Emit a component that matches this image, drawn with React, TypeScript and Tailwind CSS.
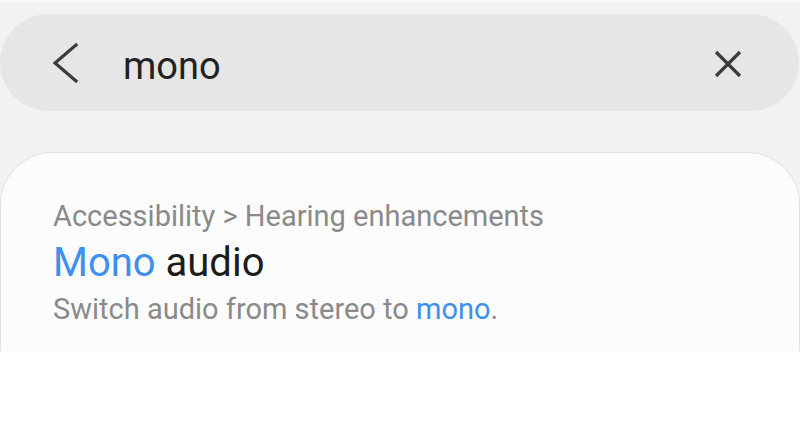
export default function App() {
  return (
    <div className="w-[800px] h-[429px] bg-white" style={{ fontFamily: "Roboto, 'Noto Sans', sans-serif" }}>
      <div className="h-[351px] bg-[#f2f2f2] overflow-hidden border-t border-[#fafafa] flex flex-col">
        {/* search bar */}
        <div className="mt-[13px] h-[97px] w-[799px] rounded-full bg-[#e6e6e6] flex items-center pl-[52px] pr-[56px]">
          <svg width="28" height="42" viewBox="0 0 28 42" className="shrink-0">
            <path d="M24 3 L3 21 L24 39" fill="none" stroke="#3d3d3d" strokeWidth="3.2" strokeLinecap="square" strokeLinejoin="miter" />
          </svg>
          <span className="ml-[43px] pt-[6px] text-[38px] leading-none text-[#222]">mono</span>
          <div className="flex-1" />
          <svg width="30" height="30" viewBox="0 0 30 30" className="shrink-0 mt-[2px]">
            <path d="M3 3 L27 27 M27 3 L3 27" fill="none" stroke="#3a3a3a" strokeWidth="3.2" />
          </svg>
        </div>

        {/* result card */}
        <div className="mt-[41px] flex-1 bg-[#fcfcfc] border border-b-0 border-[#e2e2e2] rounded-t-[52px] pl-[52px] pt-[49px]">
          <div className="text-[29px] leading-none text-[#8a8a8a]">Accessibility &gt; Hearing enhancements</div>
          <div className="mt-[12px] text-[40px] leading-none text-[#1c1c1c]">
            <span className="text-[#3f8ff0]">Mono</span> audio
          </div>
          <div className="mt-[12px] text-[29px] leading-none text-[#8a8a8a]">
            Switch audio from stereo to <span className="text-[#3f8ff0]">mono</span>.
          </div>
        </div>
      </div>
    </div>
  );
}
